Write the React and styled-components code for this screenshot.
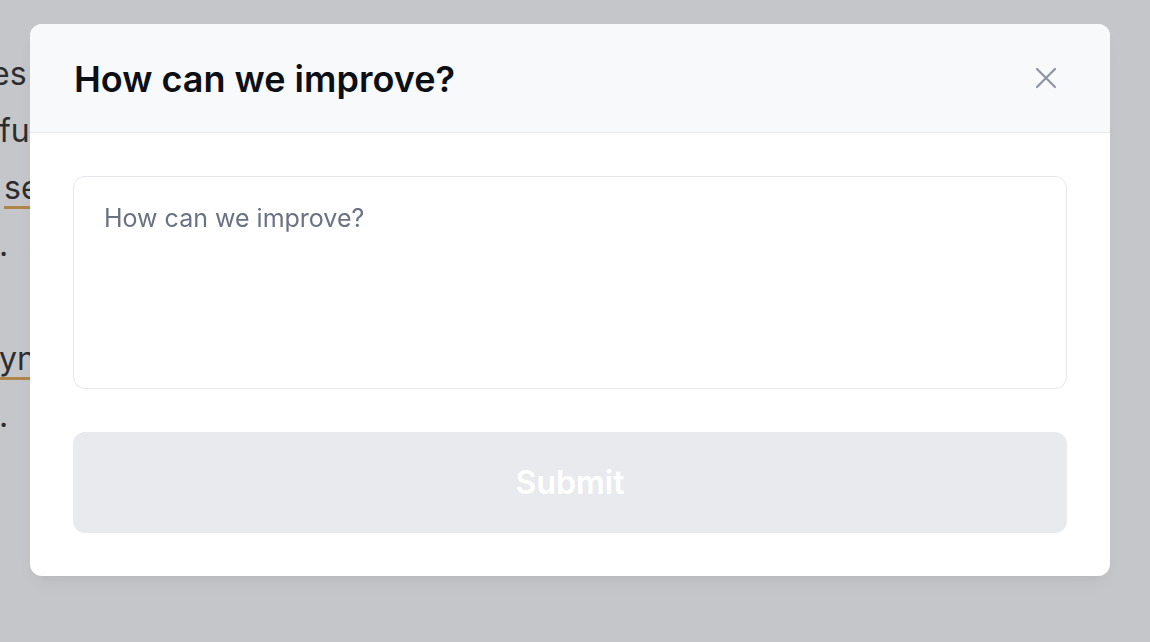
import styled, { createGlobalStyle } from 'styled-components'
import { useState } from 'react'

const GlobalStyle = createGlobalStyle`
  html, body {
    margin: 0;
    padding: 0;
    background: #ffffff;
    font-family: Inter, "Noto Sans", "Liberation Sans", sans-serif;
    overflow: hidden;
  }
`

const lines = [
  { text: 'es', shift: -8 },
  { text: 'fu' },
  { text: 'se', link: true, shift: 5 },
  { text: '.' },
  { text: '' },
  { text: 'yn', link: true },
  { text: '.' },
]

const FeedbackModal = () => {
  const [feedback, setFeedback] = useState('')

  return (
    <Overlay>
      <ModalMainContainer>
        <TitleContainer>
          <div className="title">How can we improve?</div>
          <CloseButton aria-label="close">
            <svg width="22" height="22" viewBox="0 0 22 22" fill="none">
              <path
                d="M2 2L20 20M20 2L2 20"
                stroke="#8d94a1"
                strokeWidth="2.2"
                strokeLinecap="round"
              />
            </svg>
          </CloseButton>
        </TitleContainer>

        <ContentContainer>
          <TextArea
            placeholder="How can we improve?"
            value={feedback}
            onChange={(e) => setFeedback(e.target.value)}
          />
          <SubmitButton disabled={feedback === ''}>Submit</SubmitButton>
        </ContentContainer>
      </ModalMainContainer>
    </Overlay>
  )
}

const App = () => {
  return (
    <>
      <GlobalStyle />
      <Page>
        {lines.map((line, i) => (
          <Line key={i} $shift={line.shift || 0}>
            {line.link ? <Link>{line.text}</Link> : line.text || '\u00a0'}
          </Line>
        ))}
      </Page>
      <FeedbackModal />
    </>
  )
}

export default App

const Page = styled.div`
  display: flex;
  flex-direction: column;
  padding-top: 45px;
  margin-left: -1px;
  color: #000000;
  font-size: 32px;
  line-height: 57px;
`

const Line = styled.div`
  margin-left: ${({ $shift }) => $shift}px;
  white-space: nowrap;
`

const Link = styled.span`
  text-decoration: underline;
  text-decoration-color: #d9952a;
  text-decoration-thickness: 3px;
  text-underline-offset: 7px;
`

const Overlay = styled.div`
  position: fixed;
  inset: 0;
  z-index: 100;
  display: flex;
  align-items: flex-start;
  padding: 24px 0 0 30px;
  background-color: rgba(110, 112, 120, 0.4);
`

const ModalMainContainer = styled.div`
  display: flex;
  flex-direction: column;
  width: 1080px;
  background-color: #ffffff;
  border-radius: 12px;
  overflow: hidden;
  box-shadow: 0 10px 20px -6px rgba(0, 0, 0, 0.06),
    0 4px 8px -4px rgba(0, 0, 0, 0.05);
`

const TitleContainer = styled.div`
  display: flex;
  align-items: center;
  height: 109px;
  padding: 0 44px;
  background-color: #f8f9fb;
  border-bottom: 1px solid #e8e9ee;
  box-sizing: border-box;

  .title {
    color: #0d0f17;
    font-size: 36px;
    font-weight: 600;
    line-height: 44px;
    margin-top: 2px;
  }
`

const CloseButton = styled.button`
  display: flex;
  margin-left: auto;
  margin-right: 9px;
  padding: 0;
  border: none;
  background: transparent;
  cursor: pointer;
`

const ContentContainer = styled.div`
  display: flex;
  flex-direction: column;
  gap: 43px;
  padding: 43px 43px 43px;
`

const TextArea = styled.textarea`
  height: 213px;
  box-sizing: border-box;
  padding: 23px 30px;
  border: 1px solid #e6e7eb;
  border-radius: 12px;
  resize: none;
  outline: none;
  font-family: Inter, "Noto Sans", "Liberation Sans", sans-serif;
  font-size: 25px;
  line-height: 36px;
  color: #111827;

  &::placeholder {
    color: #6b7283;
  }
`

const SubmitButton = styled.button`
  height: 101px;
  border: none;
  border-radius: 12px;
  background-color: #e9eaee;
  color: #ffffff;
  font-family: Inter, "Noto Sans", "Liberation Sans", sans-serif;
  font-size: 32px;
  font-weight: 600;
  cursor: not-allowed;
`
